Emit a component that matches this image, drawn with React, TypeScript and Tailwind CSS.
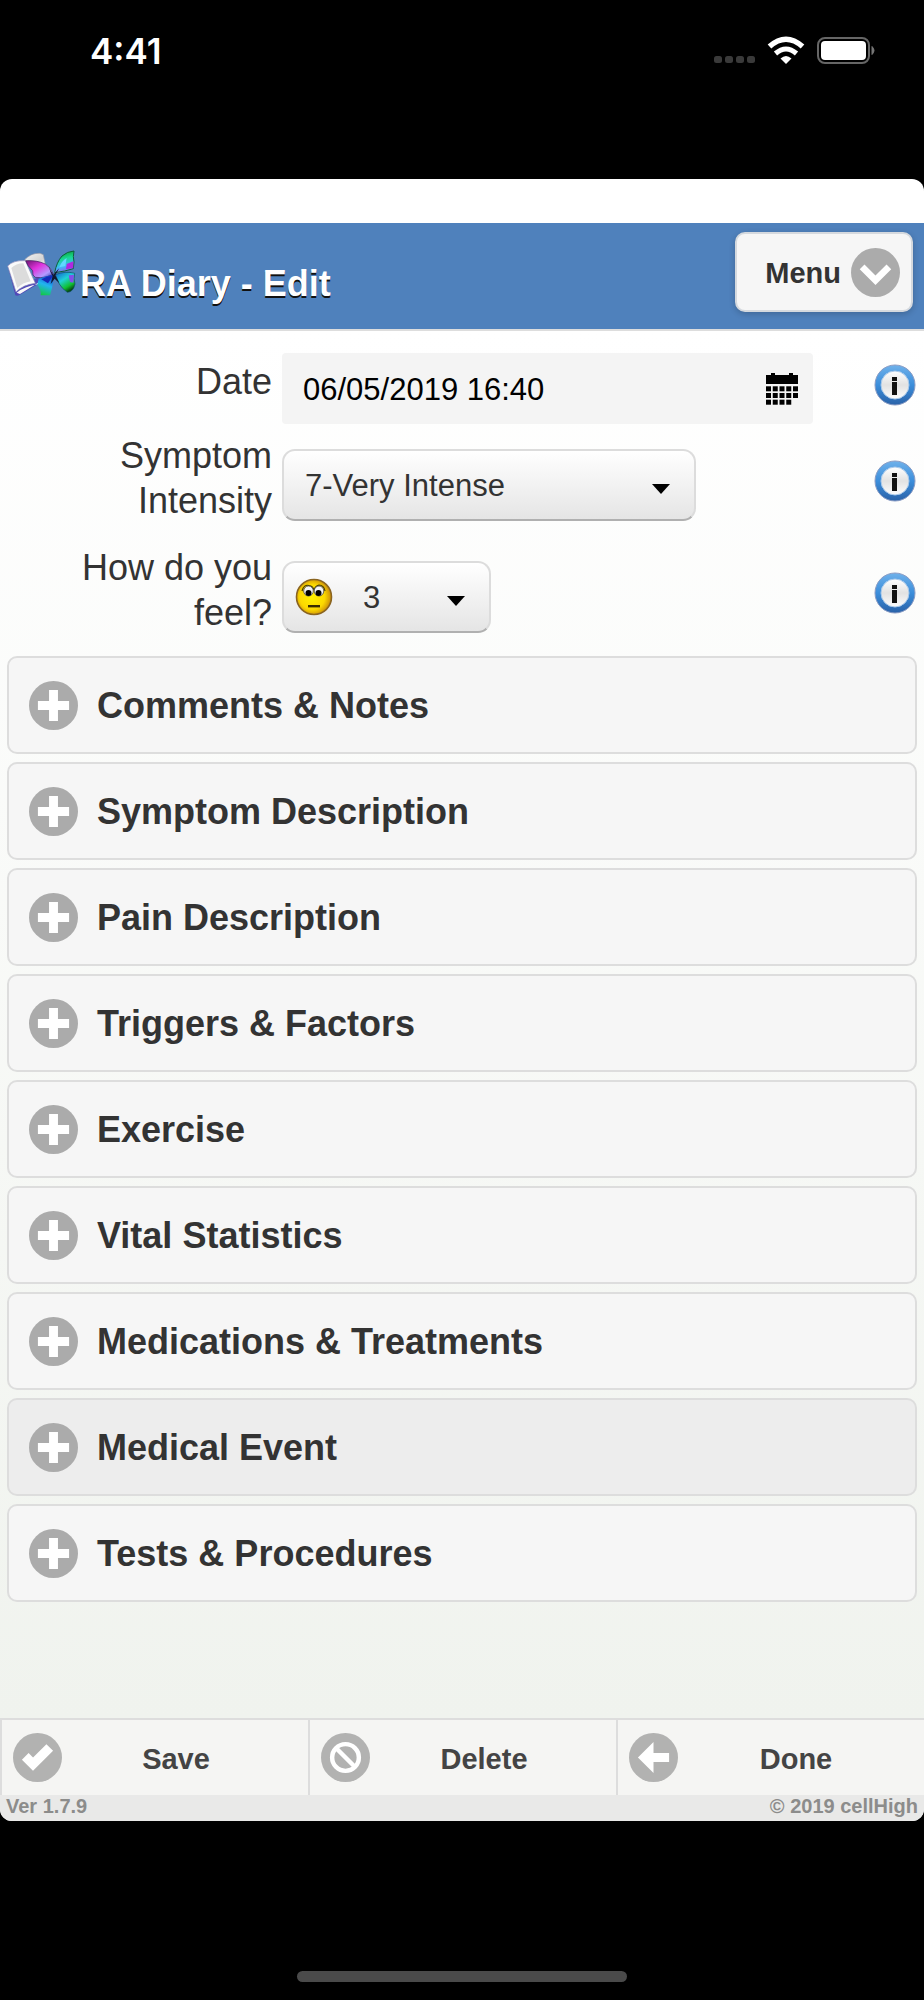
/**
 * Diary edit screen
 * Form for one diary entry, with collapsible sections and a footer toolbar
 */

import React, { useState } from 'react';

const SECTIONS = [
  'Comments & Notes',
  'Symptom Description',
  'Pain Description',
  'Triggers & Factors',
  'Exercise',
  'Vital Statistics',
  'Medications & Treatments',
  'Medical Event',
  'Tests & Procedures',
];

const StatusBar: React.FC = () => (
  <div className="flex h-[179px] items-start justify-between pl-[90px] pr-[47px] pt-[30px] text-white">
    <div className="font-['Inter',sans-serif] text-[35px] leading-[42px] font-semibold">4:41</div>
    <div className="flex items-center pt-[6px]">
      <svg width="42" height="30" viewBox="0 0 42 30" fill="#3a3a3a" aria-hidden="true">
        <rect x="0" y="20" width="8" height="7" rx="2.5" />
        <rect x="11" y="20" width="8" height="7" rx="2.5" />
        <rect x="22" y="20" width="8" height="7" rx="2.5" />
        <rect x="33" y="20" width="8" height="7" rx="2.5" />
      </svg>
      <svg className="ml-[11px]" width="38" height="30" viewBox="0 0 38 30" aria-hidden="true">
        <path d="M19 28 L13.5 22.5 Q19 17.5 24.5 22.5 Z" fill="#fff" />
        <path d="M8.5 17.5 Q19 8.5 29.5 17.5" fill="none" stroke="#fff" strokeWidth="5" />
        <path d="M2.5 10.5 Q19 -4 35.5 10.5" fill="none" stroke="#fff" strokeWidth="5.5" />
      </svg>
      <svg className="ml-[12px]" width="60" height="30" viewBox="0 0 60 30" aria-hidden="true">
        <rect x="1" y="2" width="51" height="25" rx="7" fill="none" stroke="#666" strokeWidth="2" />
        <rect x="4" y="5" width="45" height="19" rx="4" fill="#fff" />
        <path d="M55 10.5 q4 4 0 8 Z" fill="#777" stroke="#777" />
      </svg>
    </div>
  </div>
);

const DiaryLogo: React.FC = () => (
  <svg width="72" height="48" viewBox="18 30 216 144" aria-hidden="true">
    <defs>
      <linearGradient id="page" x1="0" y1="0" x2="1" y2="1">
        <stop offset="0" stopColor="#f4f4f4" />
        <stop offset="0.6" stopColor="#d4d4d4" />
        <stop offset="1" stopColor="#fff" />
      </linearGradient>
      <linearGradient id="wingLeft" x1="0" y1="0" x2="1" y2="1">
        <stop offset="0" stopColor="#6b1470" />
        <stop offset="0.4" stopColor="#e032dc" />
        <stop offset="0.75" stopColor="#b49aff" />
        <stop offset="1" stopColor="#1b2fa8" />
      </linearGradient>
      <linearGradient id="wingLower" x1="0.7" y1="0" x2="0.4" y2="1">
        <stop offset="0" stopColor="#1238c8" />
        <stop offset="0.5" stopColor="#22b4f0" />
        <stop offset="1" stopColor="#12c84a" />
      </linearGradient>
      <linearGradient id="wingRight" x1="0.4" y1="0" x2="0.6" y2="1">
        <stop offset="0" stopColor="#0c9a30" />
        <stop offset="0.35" stopColor="#18d890" />
        <stop offset="0.7" stopColor="#40b8f8" />
        <stop offset="1" stopColor="#9a50e8" />
      </linearGradient>
      <linearGradient id="wingTail" x1="0" y1="0" x2="0.6" y2="1">
        <stop offset="0" stopColor="#1458d0" />
        <stop offset="0.45" stopColor="#20d0d8" />
        <stop offset="0.8" stopColor="#10c030" />
        <stop offset="1" stopColor="#064812" />
      </linearGradient>
    </defs>
    <path d="M24 82 L46 166 Q52 169 60 164 L128 124 L120 108 L50 150 Z" fill="#5048b8" />
    <path d="M72 62 Q92 38 120 40 L130 44 L136 74 L104 88 Z" fill="url(#page)" stroke="#9a9aa8" strokeWidth="2" />
    <path d="M23 78 Q40 60 76 62 L106 130 Q70 134 48 156 Z" fill="#fafafa" stroke="#8a88b8" strokeWidth="2" />
    <path d="M34 84 Q48 70 70 70 L92 124 Q68 128 52 144 Z" fill="#dcdcdc" />
    <path d="M50 158 Q74 138 118 132 L124 122 L60 162 Z" fill="#f8f8f8" />
    <path d="M77 62 Q110 60 136 72 Q152 82 160 102 Q138 116 106 112 Q96 108 98 92 Q82 78 77 62 Z" fill="url(#wingLeft)" stroke="#40205c" strokeWidth="2" />
    <path d="M116 116 Q134 108 160 104 Q162 128 150 166 L122 166 Q124 150 112 134 Z" fill="url(#wingLower)" />
    <path d="M124 118 Q142 108 158 108 L144 130 Z" fill="#1628b8" />
    <path d="M164 98 Q170 66 186 48 Q202 34 222 33 Q218 50 222 66 L220 86 Q196 94 164 98 Z" fill="url(#wingRight)" stroke="#0c6038" strokeWidth="3" />
    <path d="M200 72 L220 64 L220 84 L198 88 Z" fill="#b028e0" />
    <path d="M178 82 Q184 64 200 54 L196 78 Z" fill="#60d8ff" />
    <path d="M166 104 Q196 92 224 100 Q220 116 225 132 Q220 156 202 157 Q186 146 178 132 Z" fill="url(#wingTail)" stroke="#0a5060" strokeWidth="2" />
    <path d="M206 106 L222 104 L220 128 L210 126 Z" fill="#8050e8" />
    <path d="M146 78 Q154 98 160 104 L178 84 L166 106 L178 130 L164 116 L152 132 L158 108 Q150 96 146 78 Z" fill="#101830" />
  </svg>
);

interface CircleIconProps {
  fill?: string;
  children: React.ReactNode;
}

// 14-unit glyph centred in a 22-unit disc
const CircleIcon: React.FC<CircleIconProps> = ({ fill = '#ababab', children }) => (
  <svg className="shrink-0" width="49" height="49" viewBox="0 0 22 22" aria-hidden="true">
    <circle cx="11" cy="11" r="11" fill={fill} />
    <g transform="translate(4 4)" fill="#fff">
      {children}
    </g>
  </svg>
);

const InfoButton: React.FC<{ topic: string }> = ({ topic }) => (
  <button type="button" aria-label={`Help for ${topic}`} className="mt-[27px] block h-[42px] w-[42px]">
    <svg width="42" height="42" viewBox="0 0 42 42" aria-hidden="true">
      <defs>
        <linearGradient id={`ring-${topic}`} x1="0" y1="0" x2="0" y2="1">
          <stop offset="0" stopColor="#6fb1ea" />
          <stop offset="0.5" stopColor="#3c8edb" />
          <stop offset="1" stopColor="#2a62a8" />
        </linearGradient>
        <linearGradient id={`disc-${topic}`} x1="0" y1="0" x2="0" y2="1">
          <stop offset="0" stopColor="#fff" />
          <stop offset="0.5" stopColor="#e2e2e2" />
          <stop offset="1" stopColor="#fdfdfd" />
        </linearGradient>
      </defs>
      <circle cx="21" cy="21" r="20" fill={`url(#ring-${topic})`} stroke="#8a9cc4" strokeWidth="1" />
      <circle cx="21" cy="21" r="14" fill={`url(#disc-${topic})`} stroke="#a9c9ea" strokeWidth="1" />
      <rect x="18" y="13" width="5" height="4" fill="#111" />
      <rect x="18" y="18" width="5" height="13" fill="#111" />
    </svg>
  </button>
);

const Caret: React.FC<{ className: string }> = ({ className }) => (
  <svg className={`pointer-events-none absolute ${className}`} width="18" height="10" viewBox="0 0 18 10" aria-hidden="true">
    <path d="M0 0 H18 L9 10 Z" fill="#000" />
  </svg>
);

const Smiley: React.FC = () => (
  <svg className="pointer-events-none absolute left-[13px] top-[17px]" width="38" height="38" viewBox="0 0 38 38" aria-hidden="true">
    <defs>
      <radialGradient id="face" cx="0.45" cy="0.5" r="0.55">
        <stop offset="0" stopColor="#fff200" />
        <stop offset="0.65" stopColor="#fcd800" />
        <stop offset="1" stopColor="#c98a08" />
      </radialGradient>
    </defs>
    <circle cx="19" cy="19" r="17.5" fill="url(#face)" stroke="#8a6420" strokeWidth="1.6" />
    <path d="M7 13 Q9 6 14 7.5 Q18 8 19 12 Q20 8 24 7 Q29 7 30 13" fill="none" stroke="#4a3c00" strokeWidth="1.2" />
    <ellipse cx="13.5" cy="13" rx="4.8" ry="5" fill="#f4f4f4" stroke="#444" strokeWidth="0.8" />
    <ellipse cx="24" cy="13" rx="4.8" ry="5" fill="#f4f4f4" stroke="#444" strokeWidth="0.8" />
    <circle cx="13.5" cy="15" r="3" fill="#000" />
    <circle cx="23.5" cy="15" r="3" fill="#000" />
    <rect x="13" y="27" width="12" height="2.4" fill="#3a2c00" />
  </svg>
);

const CalendarIcon: React.FC = () => (
  <svg width="32" height="32" viewBox="0 0 32 32" fill="#000" aria-hidden="true">
    <path d="M0 2 H5 V0 H9 V2 H23 V0 H27 V2 H32 V11 H0 Z" />
    {[0, 1, 2].map((row) =>
      [0, 1, 2, 3, 4]
        .filter((col) => row < 2 || col < 4)
        .map((col) => (
          <rect key={`${row}-${col}`} x={col * 6.75} y={13.3 + row * 6.7} width="5" height="5" />
        ))
    )}
  </svg>
);

interface FieldRowProps {
  id: string;
  label: string;
  className: string;
  labelClassName: string;
  children: React.ReactNode;
}

const FieldRow: React.FC<FieldRowProps> = ({ id, label, className, labelClassName, children }) => (
  <div className={`flex min-h-[90px] items-start pr-2 ${className}`}>
    <label htmlFor={id} className={`w-[272px] shrink-0 pl-[60px] text-right text-[36px] leading-[45px] ${labelClassName}`}>
      {label}
    </label>
    <div className="ml-[10px] mr-[61px] flex-1 pt-4">{children}</div>
    <InfoButton topic={id} />
  </div>
);

const selectClass =
  'h-[72px] w-full appearance-none rounded-[13px] border-2 border-[#dcdcdc] border-b-[#b0b0b0] bg-linear-to-b from-white to-[#e5e5e5] pt-[2px] text-[31px] text-[#333] outline-none';

const App: React.FC = () => {
  const [date, setDate] = useState('06/05/2019 16:40');
  const [intensity, setIntensity] = useState('7-Very Intense');
  const [feeling, setFeeling] = useState('3');
  const [active, setActive] = useState('Medical Event');

  return (
    <div className="flex min-h-screen flex-col bg-black font-['Liberation_Sans',Arial,sans-serif] text-[#333]">
      <StatusBar />

      <div className="flex flex-1 flex-col overflow-hidden rounded-[12px] bg-white pt-[44px]">
        {/* Header */}
        <header className="flex h-[108px] items-start justify-between border-b-2 border-[#ddd] bg-[#4f81bc] pl-[6px] pr-[11px]">
          <div className="flex items-start pt-[27px]">
            <DiaryLogo />
            <h1 className="ml-[2px] pt-[14px] text-[36px] leading-[40px] font-bold text-white [text-shadow:0_2px_0_#111]">
              RA Diary - Edit
            </h1>
          </div>
          <button
            type="button"
            className="mt-[9px] flex h-[80px] items-center rounded-[10px] border-2 border-[#d5d9de] bg-[#f6f6f6] pl-[28px] pr-[11px] text-[29px] font-bold shadow-[0_2px_6px_rgba(0,0,0,0.2)]"
          >
            <span className="mr-[10px] pt-1">Menu</span>
            <CircleIcon>
              <path d="M11.949 3.404 L7 8.354 L2.05 3.404 L-0.071 5.525 L7 12.596 L14.07 5.525 Z" />
            </CircleIcon>
          </button>
        </header>

        <main className="flex-1 bg-linear-to-b from-white to-[#f0f3ee] pt-[6px]">
          {/* Entry fields */}
          <FieldRow id="date" label="Date" className="mb-[6px]" labelClassName="pt-[22px]">
            <div className="flex h-[71px] max-w-[531px] items-center rounded-[4px] bg-[#f4f4f4] pr-[15px]">
              <input
                id="date"
                type="text"
                value={date}
                onChange={(e) => setDate(e.target.value)}
                className="h-full min-w-0 flex-1 bg-transparent pl-[21px] pt-[2px] text-[31px] text-black outline-none"
              />
              <button type="button" aria-label="Pick a date">
                <CalendarIcon />
              </button>
            </div>
          </FieldRow>

          <FieldRow id="intensity" label="Symptom Intensity" className="mb-[22px]" labelClassName="">
            <div className="relative max-w-[414px]">
              <select
                id="intensity"
                value={intensity}
                onChange={(e) => setIntensity(e.target.value)}
                className={`${selectClass} pl-[21px]`}
              >
                <option>7-Very Intense</option>
              </select>
              <Caret className="right-[26px] top-[35px]" />
            </div>
          </FieldRow>

          <FieldRow id="feeling" label="How do you feel?" className="mb-[21px]" labelClassName="">
            <div className="relative max-w-[209px]">
              <select
                id="feeling"
                value={feeling}
                onChange={(e) => setFeeling(e.target.value)}
                className={`${selectClass} pl-[79px]`}
              >
                <option>3</option>
              </select>
              <Smiley />
              <Caret className="right-[26px] top-[35px]" />
            </div>
          </FieldRow>

          {/* Collapsible sections */}
          <div className="flex flex-col gap-2 px-[7px]">
            {SECTIONS.map((title) => (
              <h2 key={title}>
                <button
                  type="button"
                  aria-expanded={false}
                  onClick={() => setActive(title)}
                  className={`flex h-[98px] w-full items-center gap-[19px] rounded-[10px] border-2 border-[#ddd] pl-[20px] text-left text-[36px] leading-[42px] font-bold ${
                    title === active ? 'bg-[#ededed]' : 'bg-[#f6f6f6]'
                  }`}
                >
                  <CircleIcon>
                    <path d="M14 5 H9 V0 H5 V5 H0 V9 H5 V14 H9 V9 H14 Z" />
                  </CircleIcon>
                  <span className="pt-[2px]">{title}</span>
                </button>
              </h2>
            ))}
          </div>
        </main>

        {/* Footer toolbar */}
        <footer className="bg-[#e9e9e8]">
          <div className="grid grid-cols-3 border-t-2 border-[#ddd] bg-[#f5f5f3] text-[29px] font-bold text-[#444]">
            <button type="button" className="flex h-[75px] items-center border-l-2 border-[#ddd] pl-[11px]">
              <CircleIcon fill="#b2b2b1">
                <path d="M14 4 L11 1 L5.003 6.997 L3 5 L0 8 L4.966 13 L4.983 12.982 L5 13 Z" />
              </CircleIcon>
              <span className="flex-1 pr-[18px] pt-1">Save</span>
            </button>
            <button type="button" className="flex h-[75px] items-center border-l-2 border-[#ddd] pl-[11px]">
              <CircleIcon fill="#b2b2b1">
                <circle cx="7" cy="7" r="6" fill="none" stroke="#fff" strokeWidth="2" />
                <path d="M2.5 2.5 L11.5 11.5" stroke="#fff" strokeWidth="2" />
              </CircleIcon>
              <span className="flex-1 pr-[18px] pt-1">Delete</span>
            </button>
            <button type="button" className="flex h-[75px] items-center border-l-2 border-[#ddd] pl-[11px]">
              <CircleIcon fill="#b2b2b1">
                <path d="M7 5 V0 L0 7 L7 14 V9 H14 V5 Z" />
              </CircleIcon>
              <span className="flex-1 pr-[10px] pt-1">Done</span>
            </button>
          </div>
          <div className="flex justify-between px-[6px] pb-[3px] text-[20px] leading-[23px] font-bold text-[#8c8c8b]">
            <span>Ver 1.7.9</span>
            <span>© 2019 cellHigh</span>
          </div>
        </footer>
      </div>

      {/* Home indicator */}
      <div className="flex h-[179px] items-end justify-center pb-[18px]">
        <div className="h-[11px] w-[330px] rounded-full bg-[#4a4a4a]" />
      </div>
    </div>
  );
};

export default App;
